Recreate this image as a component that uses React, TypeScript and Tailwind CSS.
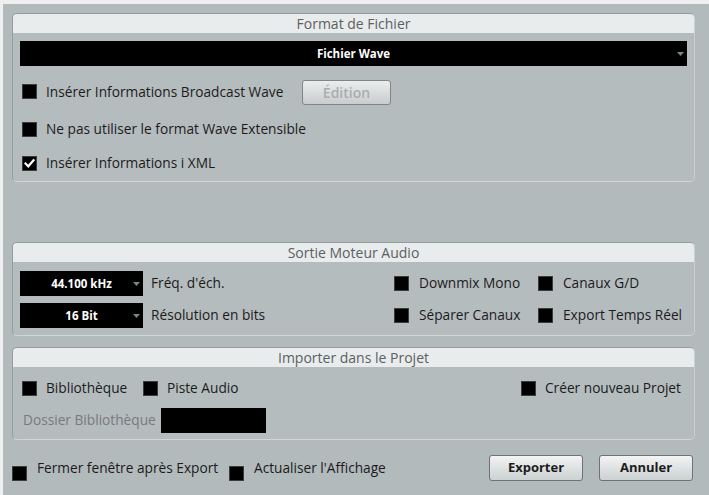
import type { ReactNode } from 'react';

const font = { fontFamily: '"Open Sans", "Noto Sans", sans-serif' };

function Box({ checked = false, className = '' }: { checked?: boolean; className?: string }) {
  return (
    <span
      className={`flex h-[15px] w-[15px] shrink-0 items-center justify-center border border-[#3a3d3e] bg-black ${className}`}
    >
      {checked && (
        <svg width="11" height="11" viewBox="0 0 11 11">
          <path d="M1.5 5.5 L4.3 8.3 L9.5 2.2" fill="none" stroke="#fff" strokeWidth="2.2" strokeLinecap="square" />
        </svg>
      )}
    </span>
  );
}

function Check({ label, checked, gap = 'gap-[9px]' }: { label: string; checked?: boolean; gap?: string }) {
  return (
    <label className={`flex items-center ${gap}`}>
      <Box checked={checked} />
      <span className="whitespace-nowrap">{label}</span>
    </label>
  );
}

function Arrow() {
  return (
    <svg width="7" height="4" viewBox="0 0 7 4" className="absolute right-[3px] top-1/2 -translate-y-1/2">
      <path d="M0 0 H7 L3.5 4 Z" fill="#7d8486" />
    </svg>
  );
}

function Select({ value, className = '' }: { value: string; className?: string }) {
  return (
    <div className={`relative flex h-[25px] items-center justify-center bg-black ${className}`}>
      <span className="text-[11.5px] font-bold text-white">{value}</span>
      <Arrow />
    </div>
  );
}

function Panel({ title, children, className = '' }: { title: string; children: ReactNode; className?: string }) {
  return (
    <section
      className={`rounded-[5px] border border-[#959c9e] border-b-[#d2d6d7] border-r-[#cbd0d1] bg-[#b5bcbe] ${className}`}
    >
      <div className="h-[19px] rounded-t-[4px] bg-[#e9ecec] text-center text-[14px] leading-[19px] text-[#5b6062]">
        {title}
      </div>
      <div className="px-[7px]">{children}</div>
    </section>
  );
}

function Button({ children }: { children: ReactNode }) {
  return (
    <button className="h-[26px] w-[94px] rounded-[3px] border border-[#6e7476] bg-gradient-to-b from-[#f3f4f4] to-[#ccd1d2] text-[13px] font-bold text-[#1c1c1c]">
      {children}
    </button>
  );
}

export default function App() {
  return (
    <div
      style={font}
      className="flex h-[495px] w-[709px] flex-col border-l-[3px] border-t-4 border-[#eef0f0] bg-[#b3babc] pl-[9px] pr-[14px] text-[13.7px] text-[#1b1b1b]"
    >
      <Panel title="Format de Fichier" className="mt-[9px]">
        <Select value="Fichier Wave" className="mt-[8px]" />
        <div className="mt-[13px] flex h-[26px] items-center pl-[2px]">
          <div className="w-[280px]">
            <Check label="Insérer Informations Broadcast Wave" />
          </div>
          <button className="h-[25px] w-[89px] rounded-[3px] border border-[#7f8588] bg-gradient-to-b from-[#eceeee] to-[#c8cccd] text-[14px] font-semibold text-[#a9adae]">
            Édition
          </button>
        </div>
        <div className="mt-[14px] flex h-[20px] items-center pl-[2px]">
          <Check label="Ne pas utiliser le format Wave Extensible" />
        </div>
        <div className="mb-[8px] mt-[14px] flex h-[20px] items-center pl-[2px]">
          <Check label="Insérer Informations i XML" checked />
        </div>
      </Panel>

      <Panel title="Sortie Moteur Audio" className="mt-[60px]">
        <div className="mt-[9px] flex h-[25px] items-center">
          <div className="flex flex-1 items-center gap-[8px]">
            <Select value="44.100 kHz" className="w-[123px]" />
            <span>Fréq. d'éch.</span>
          </div>
          <div className="w-[144px]">
            <Check label="Downmix Mono" gap="gap-[10px]" />
          </div>
          <div className="w-[149px]">
            <Check label="Canaux G/D" gap="gap-[10px]" />
          </div>
        </div>
        <div className="mb-[7px] mt-[7px] flex h-[25px] items-center">
          <div className="flex flex-1 items-center gap-[8px]">
            <Select value="16 Bit" className="w-[123px]" />
            <span>Résolution en bits</span>
          </div>
          <div className="w-[144px]">
            <Check label="Séparer Canaux" gap="gap-[10px]" />
          </div>
          <div className="w-[149px]">
            <Check label="Export Temps Réel" gap="gap-[10px]" />
          </div>
        </div>
      </Panel>

      <Panel title="Importer dans le Projet" className="mt-[11px]">
        <div className="mt-[11px] flex h-[20px] items-center pl-[2px]">
          <div className="w-[121px]">
            <Check label="Bibliothèque" />
          </div>
          <Check label="Piste Audio" />
          <div className="ml-auto w-[166px]">
            <Check label="Créer nouveau Projet" />
          </div>
        </div>
        <div className="mb-[6px] mt-[10px] flex h-[25px] items-center gap-[5px] pl-[3px]">
          <span className="text-[#767b7d]">Dossier Bibliothèque</span>
          <div className="h-[25px] w-[105px] bg-black" />
        </div>
      </Panel>

      <div className="mt-[15px] flex h-[26px] items-center">
        <div className="w-[217px]">
          <label className="flex items-center gap-[10px]">
            <Box className="translate-y-[6px]" />
            <span>Fermer fenêtre après Export</span>
          </label>
        </div>
        <label className="flex items-center gap-[10px]">
          <Box className="translate-y-[6px]" />
          <span>Actualiser l'Affichage</span>
        </label>
        <div className="ml-auto mr-[2px] flex gap-[16px]">
          <Button>Exporter</Button>
          <Button>Annuler</Button>
        </div>
      </div>
    </div>
  );
}
